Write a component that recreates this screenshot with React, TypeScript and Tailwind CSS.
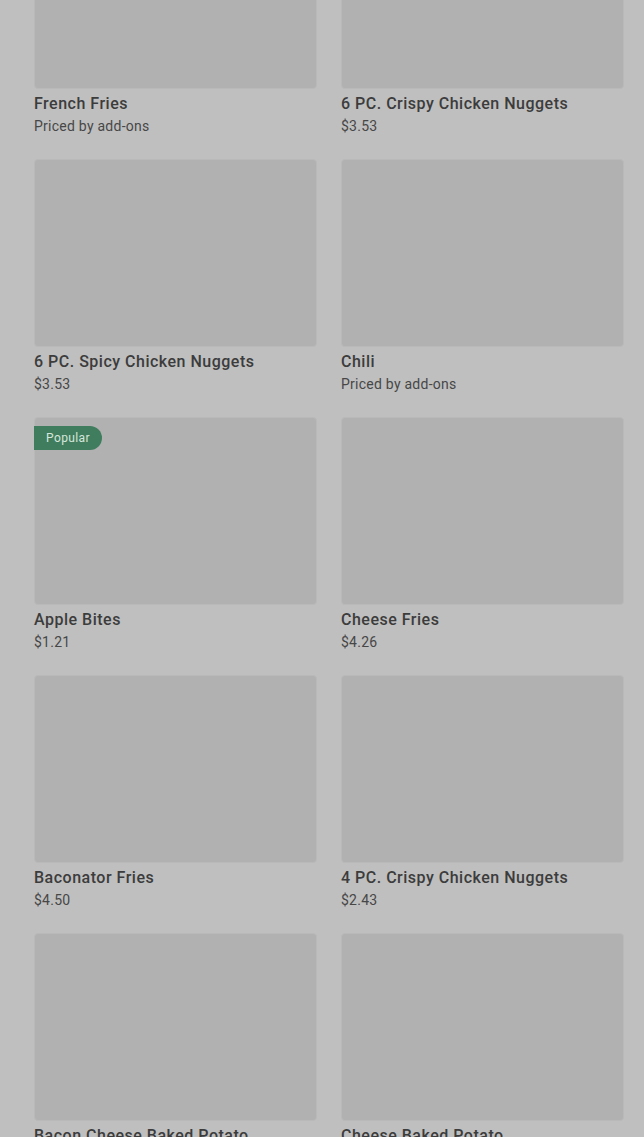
import React from 'react';

type Item = { name: string; price: string; popular?: boolean };

const items: Item[] = [
  { name: 'French Fries', price: 'Priced by add-ons' },
  { name: '6 PC. Crispy Chicken Nuggets', price: '$3.53' },
  { name: '6 PC. Spicy Chicken Nuggets', price: '$3.53' },
  { name: 'Chili', price: 'Priced by add-ons' },
  { name: 'Apple Bites', price: '$1.21', popular: true },
  { name: 'Cheese Fries', price: '$4.26' },
  { name: 'Baconator Fries', price: '$4.50' },
  { name: '4 PC. Crispy Chicken Nuggets', price: '$2.43' },
  { name: 'Bacon Cheese Baked Potato', price: '$5.12' },
  { name: 'Cheese Baked Potato', price: '$4.26' },
];

export default function App() {
  return (
    <div
      className="h-[1137px] overflow-hidden bg-[#bfbfbf]"
      style={{ fontFamily: 'Roboto, "Noto Sans", sans-serif' }}
    >
      <div className="-mt-[99px] grid grid-cols-2 gap-x-6 gap-y-[23px] pl-[34px] pr-5">
        {items.map((item) => (
          <div key={item.name} className="flex flex-col">
            <div className="relative h-[188px] rounded-sm border border-[#b9b9b9] bg-[#b1b1b1]">
              {item.popular && (
                <span className="absolute -left-px top-2 rounded-r-full bg-[#3f7d5e] py-1 pl-3 pr-3 text-xs leading-4 tracking-[0.4px] text-[#d6e6db]">
                  Popular
                </span>
              )}
            </div>
            <p className="mt-[3px] text-base leading-6 font-medium tracking-[0.5px] text-[#3c3c3c]">
              {item.name}
            </p>
            <p className="text-sm leading-5 tracking-[0.25px] text-[#474747]">{item.price}</p>
          </div>
        ))}
      </div>
    </div>
  );
}
